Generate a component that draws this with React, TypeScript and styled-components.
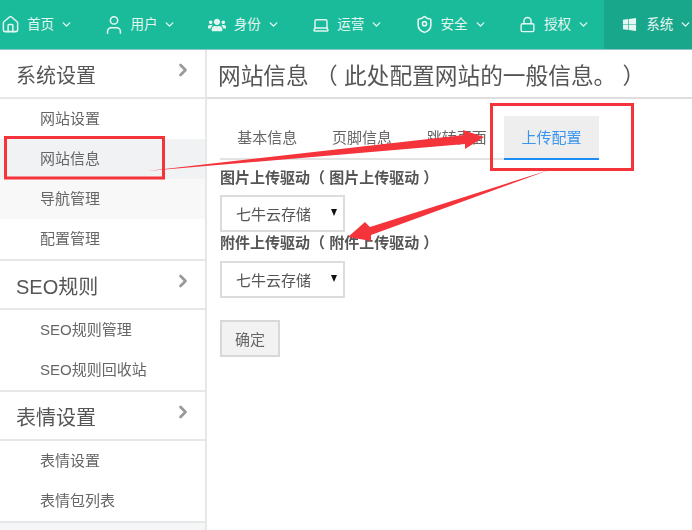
import * as React from "react"
import styled, { createGlobalStyle } from "styled-components"
import { ChevronDown, ChevronRight, House, Laptop, Lock, User } from "lucide-react"
import { FaUsers, FaWindows } from "react-icons/fa"

const GlobalStyle = createGlobalStyle`
  html, body {
    margin: 0;
    padding: 0;
    background: #fff;
  }
  * {
    box-sizing: border-box;
  }
  body {
    font-family: "Liberation Sans", "Noto Sans CJK SC", sans-serif;
    overflow: hidden;
  }
`

const Page = styled.div`
  position: relative;
  width: 692px;
  height: 530px;
  overflow: hidden;
  filter: blur(0.35px);
`

const TopBar = styled.nav`
  display: flex;
  height: 50px;
  background: #1abb9a;
  border-bottom: 1px solid #8fc4c9;
`

const NavItem = styled.div<{ $active?: boolean }>`
  display: flex;
  flex: none;
  align-items: center;
  width: ${(p) => (p.$active ? "88px" : "103.4px")};
  margin-left: ${(p) => (p.$active ? "-16px" : "0")};
  padding-left: ${(p) => (p.$active ? "18px" : "3px")};
  background: ${(p) => (p.$active ? "#18a78a" : "transparent")};
  color: #e4f6f2;
  font-size: 13.5px;
`

const NavIcon = styled.span`
  display: flex;
  flex: none;
  justify-content: center;
  width: 15px;
  margin-right: 9px;

  svg {
    flex: none;
  }
`

const NavLabel = styled.span`
  flex: none;
  width: 27px;
  margin-top: -4px;
  margin-right: 6px;
  white-space: nowrap;
`

const Body = styled.div`
  display: flex;
  height: 480px;
`

const Sidebar = styled.aside`
  flex: none;
  width: 207px;
  border-right: 2px solid #e7e7e7;
`

const GroupTitle = styled.div`
  display: flex;
  align-items: center;
  justify-content: space-between;
  height: 49px;
  padding: 2px 15px 0 16px;
  border-bottom: 2px solid #e7e7e7;
  color: #555;
  font-size: 20px;
`

const GroupArrow = styled(ChevronRight)`
  margin-top: -10px;
  margin-right: -3px;
  color: #999;
`

const SideList = styled.div`
  border-bottom: 2px solid #e7e7e7;
`

const SideItem = styled.div<{ $tone?: string }>`
  height: 40px;
  padding-left: 40px;
  background: ${(p) => p.$tone || "#fff"};
  color: #666;
  font-size: 15px;
  line-height: 40px;
`

const SideRest = styled.div`
  height: 20px;
  background: #f5f6f7;
`

const Content = styled.main`
  flex: 1;
  min-width: 0;
`

const PageHeader = styled.div`
  height: 49px;
  padding-left: 11px;
  border-bottom: 2px solid #dedede;
  color: #555;
  font-size: 22.7px;
  line-height: 52px;
  white-space: pre;
`

const Panel = styled.div`
  padding: 17px 0 0 13px;
`

const Tabs = styled.div`
  display: inline-flex;
  height: 44px;
  border-bottom: 2px solid #e2e2e2;
`

const Tab = styled.div<{ $active?: boolean }>`
  width: ${(p) => (p.$active ? "95px" : "94.7px")};
  height: 44px;
  padding-top: 1px;
  background: ${(p) => (p.$active ? "#eeeeee" : "transparent")};
  border-bottom: 2px solid ${(p) => (p.$active ? "#1c8df2" : "transparent")};
  color: ${(p) => (p.$active ? "#3a95f0" : "#666")};
  font-size: 15px;
  line-height: 41px;
  text-align: center;
`

const FieldLabel = styled.label`
  display: block;
  height: 28px;
  color: #555;
  font-size: 15px;
  font-weight: 700;
  line-height: 22px;
  white-space: pre;
`

const SelectWrap = styled.div`
  position: relative;
  width: 125px;
  height: 37px;

  &::after {
    position: absolute;
    top: 14px;
    right: 8px;
    border-top: 7px solid #111;
    border-right: 3.5px solid transparent;
    border-left: 3.5px solid transparent;
    content: "";
  }
`

const Select = styled.select`
  display: block;
  width: 100%;
  height: 100%;
  padding: 2px 0 0 14px;
  appearance: none;
  background: #fff;
  border: 2px solid #dcdcdc;
  border-radius: 0;
  color: #555;
  font-family: inherit;
  font-size: 15px;
`

const Field = styled.div`
  padding-top: 7px;

  & + & {
    padding-top: 0;

    ${FieldLabel} {
      height: 29px;
    }
  }
`

const SubmitButton = styled.button`
  display: block;
  width: 60px;
  height: 37px;
  margin-top: 22px;
  padding: 0;
  background: #f2f2f2;
  border: 2px solid #d8d8d8;
  border-radius: 0;
  color: #666;
  font-family: inherit;
  font-size: 15px;
`

const Annotations = styled.svg`
  position: absolute;
  top: 0;
  left: 0;
  pointer-events: none;
`

const ShieldIcon = () => (
  <svg
    width="19"
    height="19"
    viewBox="0 0 24 24"
    fill="none"
    stroke="currentColor"
    strokeWidth="2"
    strokeLinejoin="round"
  >
    <path d="M20 13c0 5-3.5 7.5-7.66 8.95a1 1 0 0 1-.67-.01C7.5 20.5 4 18 4 13V6a1 1 0 0 1 1-1c2 0 4.5-1.2 6.24-2.72a1.17 1.17 0 0 1 1.52 0C14.51 3.81 17 5 19 5a1 1 0 0 1 1 1z" />
    <circle cx="12" cy="11" r="2.6" />
  </svg>
)

const navItems = [
  { label: "首页", icon: <House size={19} strokeWidth={1.9} /> },
  { label: "用户", icon: <User size={22} strokeWidth={1.7} /> },
  { label: "身份", icon: <FaUsers size={18} /> },
  { label: "运营", icon: <Laptop size={18} strokeWidth={1.9} /> },
  { label: "安全", icon: <ShieldIcon /> },
  { label: "授权", icon: <Lock size={17} strokeWidth={2} /> },
]

const Group = ({
  title,
  items,
  tones = {},
}: {
  title: string
  items: string[]
  tones?: Record<string, string>
}) => (
  <>
    <GroupTitle>
      {title}
      <GroupArrow size={20} strokeWidth={3.2} />
    </GroupTitle>
    <SideList>
      {items.map((item) => (
        <SideItem key={item} $tone={tones[item]}>
          {item}
        </SideItem>
      ))}
    </SideList>
  </>
)

const App = () => (
  <Page>
    <GlobalStyle />
    <TopBar>
      {navItems.map((item) => (
        <NavItem key={item.label}>
          <NavIcon>{item.icon}</NavIcon>
          <NavLabel>{item.label}</NavLabel>
          <ChevronDown size={13} strokeWidth={2.6} />
        </NavItem>
      ))}
      <NavItem $active>
        <NavIcon>
          <FaWindows size={15} />
        </NavIcon>
        <NavLabel>系统</NavLabel>
        <ChevronDown size={13} strokeWidth={2.6} />
      </NavItem>
    </TopBar>
    <Body>
      <Sidebar>
        <Group
          title="系统设置"
          items={["网站设置", "网站信息", "导航管理", "配置管理"]}
          tones={{ 网站信息: "#f1f2f4", 导航管理: "#f8f8f8" }}
        />
        <Group title="SEO规则" items={["SEO规则管理", "SEO规则回收站"]} />
        <Group title="表情设置" items={["表情设置", "表情包列表"]} />
        <SideRest />
      </Sidebar>
      <Content>
        <PageHeader>网站信息 （ 此处配置网站的一般信息。 ）</PageHeader>
        <Panel>
          <Tabs>
            <Tab>基本信息</Tab>
            <Tab>页脚信息</Tab>
            <Tab>跳转页面</Tab>
            <Tab $active>上传配置</Tab>
          </Tabs>
          <Field>
            <FieldLabel>图片上传驱动（ 图片上传驱动 ）</FieldLabel>
            <SelectWrap>
              <Select defaultValue="qiniu">
                <option value="qiniu">七牛云存储</option>
              </Select>
            </SelectWrap>
          </Field>
          <Field>
            <FieldLabel>附件上传驱动（ 附件上传驱动 ）</FieldLabel>
            <SelectWrap>
              <Select defaultValue="qiniu">
                <option value="qiniu">七牛云存储</option>
              </Select>
            </SelectWrap>
          </Field>
          <SubmitButton>确定</SubmitButton>
        </Panel>
      </Content>
    </Body>
    <Annotations width="692" height="530" viewBox="0 0 692 530">
      <rect x="5.5" y="137.5" width="158" height="40.5" fill="none" stroke="#f5333a" strokeWidth="3" />
      <rect x="491.5" y="104.5" width="141" height="65" fill="none" stroke="#f5333a" strokeWidth="3" />
      <polygon points="147,171 464,135 463,130 484,137 465,149 465,144" fill="#f5333a" />
      <polygon points="549,170 370,227 365,222 348,237 371,241 371,235" fill="#f5333a" />
    </Annotations>
  </Page>
)

export default App
